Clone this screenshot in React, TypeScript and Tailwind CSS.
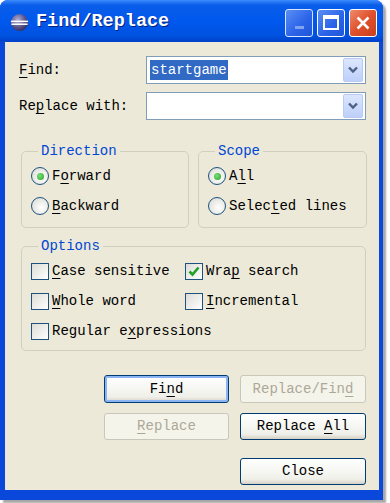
import React from "react";

const U = ({ children }: { children: React.ReactNode }) => (
  <span className="underline decoration-1 underline-offset-[3px]">{children}</span>
);

function Chevron() {
  return (
    <svg width="12" height="8" viewBox="0 0 12 8">
      <path d="M2 1.5 L6 5.5 L10 1.5" fill="none" stroke="#4D6185" strokeWidth="2.4" />
    </svg>
  );
}

function Combo({ value }: { value?: string }) {
  return (
    <div className="flex h-[28px] w-[220px] items-center border border-[#7F9DB9] bg-white">
      <div className="flex flex-1 items-center pl-[3px]">
        {value && <span className="bg-[#316AC5] px-px leading-[20px] text-white">{value}</span>}
      </div>
      <div className="mr-[2px] flex h-[24px] w-[20px] items-center justify-center rounded-[2px] border border-[#B9CBF3] bg-[linear-gradient(to_bottom,#DCE6FD,#BDD0FA)]">
        <Chevron />
      </div>
    </div>
  );
}

function Radio({ checked, children }: { checked?: boolean; children: React.ReactNode }) {
  return (
    <div className="flex h-[30px] items-center gap-[3px]">
      <div className="flex h-[18px] w-[18px] items-center justify-center rounded-full border border-[#1C5180] bg-[radial-gradient(circle_at_60%_60%,#FFFFFF,#D8D8CF)]">
        {checked && <div className="h-[7px] w-[7px] rounded-full bg-[radial-gradient(circle_at_40%_40%,#7BE07B,#21A121)]" />}
      </div>
      <span>{children}</span>
    </div>
  );
}

function Check({ checked, children, w }: { checked?: boolean; children: React.ReactNode; w?: string }) {
  return (
    <div className={`flex h-[30px] items-center gap-[3px] ${w ?? ""}`}>
      <div className="flex h-[17px] w-[18px] items-center justify-center border border-[#1C5180] bg-[linear-gradient(135deg,#DCDCD7,#FFFFFF)]">
        {checked && (
          <svg width="12" height="11" viewBox="0 0 12 11">
            <path d="M1.5 5.5 L4.5 8.5 L10.5 1.5" fill="none" stroke="#21A121" strokeWidth="2.6" />
          </svg>
        )}
      </div>
      <span>{children}</span>
    </div>
  );
}

function Btn({ children, disabled, def }: { children: React.ReactNode; disabled?: boolean; def?: boolean }) {
  if (disabled) {
    return (
      <div className="flex h-full items-center justify-center rounded-[3px] border border-[#C9C7BA] bg-[#F5F4EA] text-[#ACA899]">
        <span>{children}</span>
      </div>
    );
  }
  return (
    <div
      className={`flex h-full items-center justify-center rounded-[3px] border border-[#003C74] bg-[linear-gradient(to_bottom,#FFFFFF,#F0F0EA_80%,#D6D0C5)] text-black ${
        def ? "shadow-[inset_0_0_0_2px_#8CB4F2]" : ""
      }`}
    >
      <span>{children}</span>
    </div>
  );
}

function Group({ title, children, className }: { title: string; children: React.ReactNode; className?: string }) {
  return (
    <fieldset className={`rounded-[5px] border border-[#D0D0BF] px-[9px] pt-[2px] ${className ?? ""}`}>
      <legend className="ml-[7px] px-[3px] leading-[16px] text-[#0046D5]">{title}</legend>
      {children}
    </fieldset>
  );
}

export default function App() {
  return (
    <div className="h-[503px] w-[390px] bg-white font-['Liberation_Mono','Courier_New',monospace] text-[14px] text-black">
      <div className="flex h-[500px] w-[383px] flex-col rounded-t-[8px] bg-[#0A48DC] shadow-[3px_3px_2px_rgba(0,0,0,0.35)]">
        {/* Title bar */}
        <div className="flex h-[42px] items-center rounded-t-[8px] bg-[linear-gradient(to_bottom,#3D8CFF,#0A5DE8_12%,#0058EE_50%,#0052E0_85%,#0040C8)] pl-[10px] pr-[6px]">
          <svg width="19" height="19" viewBox="0 0 20 20" className="mt-[2px]">
            <defs>
              <radialGradient id="sph" cx="40%" cy="35%" r="70%">
                <stop offset="0%" stopColor="#B4B2DA" />
                <stop offset="60%" stopColor="#5A568E" />
                <stop offset="100%" stopColor="#2E2A5C" />
              </radialGradient>
            </defs>
            <circle cx="10" cy="10" r="9" fill="url(#sph)" />
            <rect x="1" y="8" width="18" height="1.6" fill="#FFFFFF" />
            <rect x="1.5" y="11" width="17" height="1.6" fill="#FFFFFF" />
          </svg>
          <span className="ml-[7px] mt-[2px] text-[18.5px] font-bold text-white [text-shadow:1px_1px_0_#0A1E7E]">Find/Replace</span>
          <div className="ml-auto mt-[3px] flex gap-[4px]">
            <div className="flex h-[28px] w-[28px] items-end justify-center rounded-[3px] border border-[#D8E4FA] bg-[linear-gradient(135deg,#5A8EF5,#2A62E8_60%,#1F55D8)] pb-[7px]">
              <div className="h-[3px] w-[9px] bg-[#7FA3F0]" />
            </div>
            <div className="flex h-[28px] w-[28px] items-center justify-center rounded-[3px] border border-[#FFFFFF] bg-[linear-gradient(135deg,#5A8EF5,#2A62E8_60%,#1F55D8)]">
              <div className="h-[15px] w-[16px] border-2 border-t-[4px] border-white" />
            </div>
            <div className="flex h-[28px] w-[28px] items-center justify-center rounded-[3px] border border-[#FFFFFF] bg-[linear-gradient(135deg,#EE8C6C,#E0502C_50%,#C8401C)]">
              <svg width="16" height="16" viewBox="0 0 16 16">
                <path d="M2.5 2.5 L13.5 13.5 M13.5 2.5 L2.5 13.5" stroke="#FFFFFF" strokeWidth="2.6" />
              </svg>
            </div>
          </div>
        </div>

        {/* Body */}
        <div className="mx-[5px] mb-[10px] mr-[4px] flex flex-1 flex-col bg-[#ECE9D8] pt-[14px]">
          <div className="flex flex-col gap-[8px]">
            <div className="flex items-center">
              <span className="w-[141px] pl-[14px]">
                <U>F</U>ind:
              </span>
              <Combo value="startgame" />
            </div>
            <div className="flex items-center">
              <span className="w-[141px] pl-[14px]">
                Re<U>p</U>lace with:
              </span>
              <Combo />
            </div>
          </div>

          <div className="mt-[23px] flex gap-[9px] pl-[16px]">
            <Group title="Direction" className="w-[168px] pb-[6px]">
              <Radio checked>
                F<U>o</U>rward
              </Radio>
              <Radio>
                <U>B</U>ackward
              </Radio>
            </Group>
            <Group title="Scope" className="w-[169px] pb-[6px]">
              <Radio checked>
                A<U>l</U>l
              </Radio>
              <Radio>
                Selec<U>t</U>ed lines
              </Radio>
            </Group>
          </div>

          <div className="mt-[10px] pl-[16px] pr-[13px]">
            <Group title="Options" className="pb-[4px]">
              <div className="flex">
                <Check w="w-[154px]">
                  <U>C</U>ase sensitive
                </Check>
                <Check checked>
                  Wra<U>p</U> search
                </Check>
              </div>
              <div className="flex">
                <Check w="w-[154px]">
                  <U>W</U>hole word
                </Check>
                <Check>
                  <U>I</U>ncremental
                </Check>
              </div>
              <Check>
                Regular e<U>x</U>pressions
              </Check>
            </Group>
          </div>

          <div className="mt-[24px] flex flex-col items-end pr-[13px]">
            <div className="grid grid-cols-[125px_126px] grid-rows-[28px_27px] gap-x-[11px] gap-y-[10px]">
              <Btn def>
                Fi<U>n</U>d
              </Btn>
              <Btn disabled>
                Replace/Fin<U>d</U>
              </Btn>
              <Btn disabled>
                <U>R</U>eplace
              </Btn>
              <Btn>
                Replace <U>A</U>ll
              </Btn>
            </div>
            <div className="mt-[18px] h-[27px] w-[126px]">
              <Btn>Close</Btn>
            </div>
          </div>
        </div>
      </div>
    </div>
  );
}
